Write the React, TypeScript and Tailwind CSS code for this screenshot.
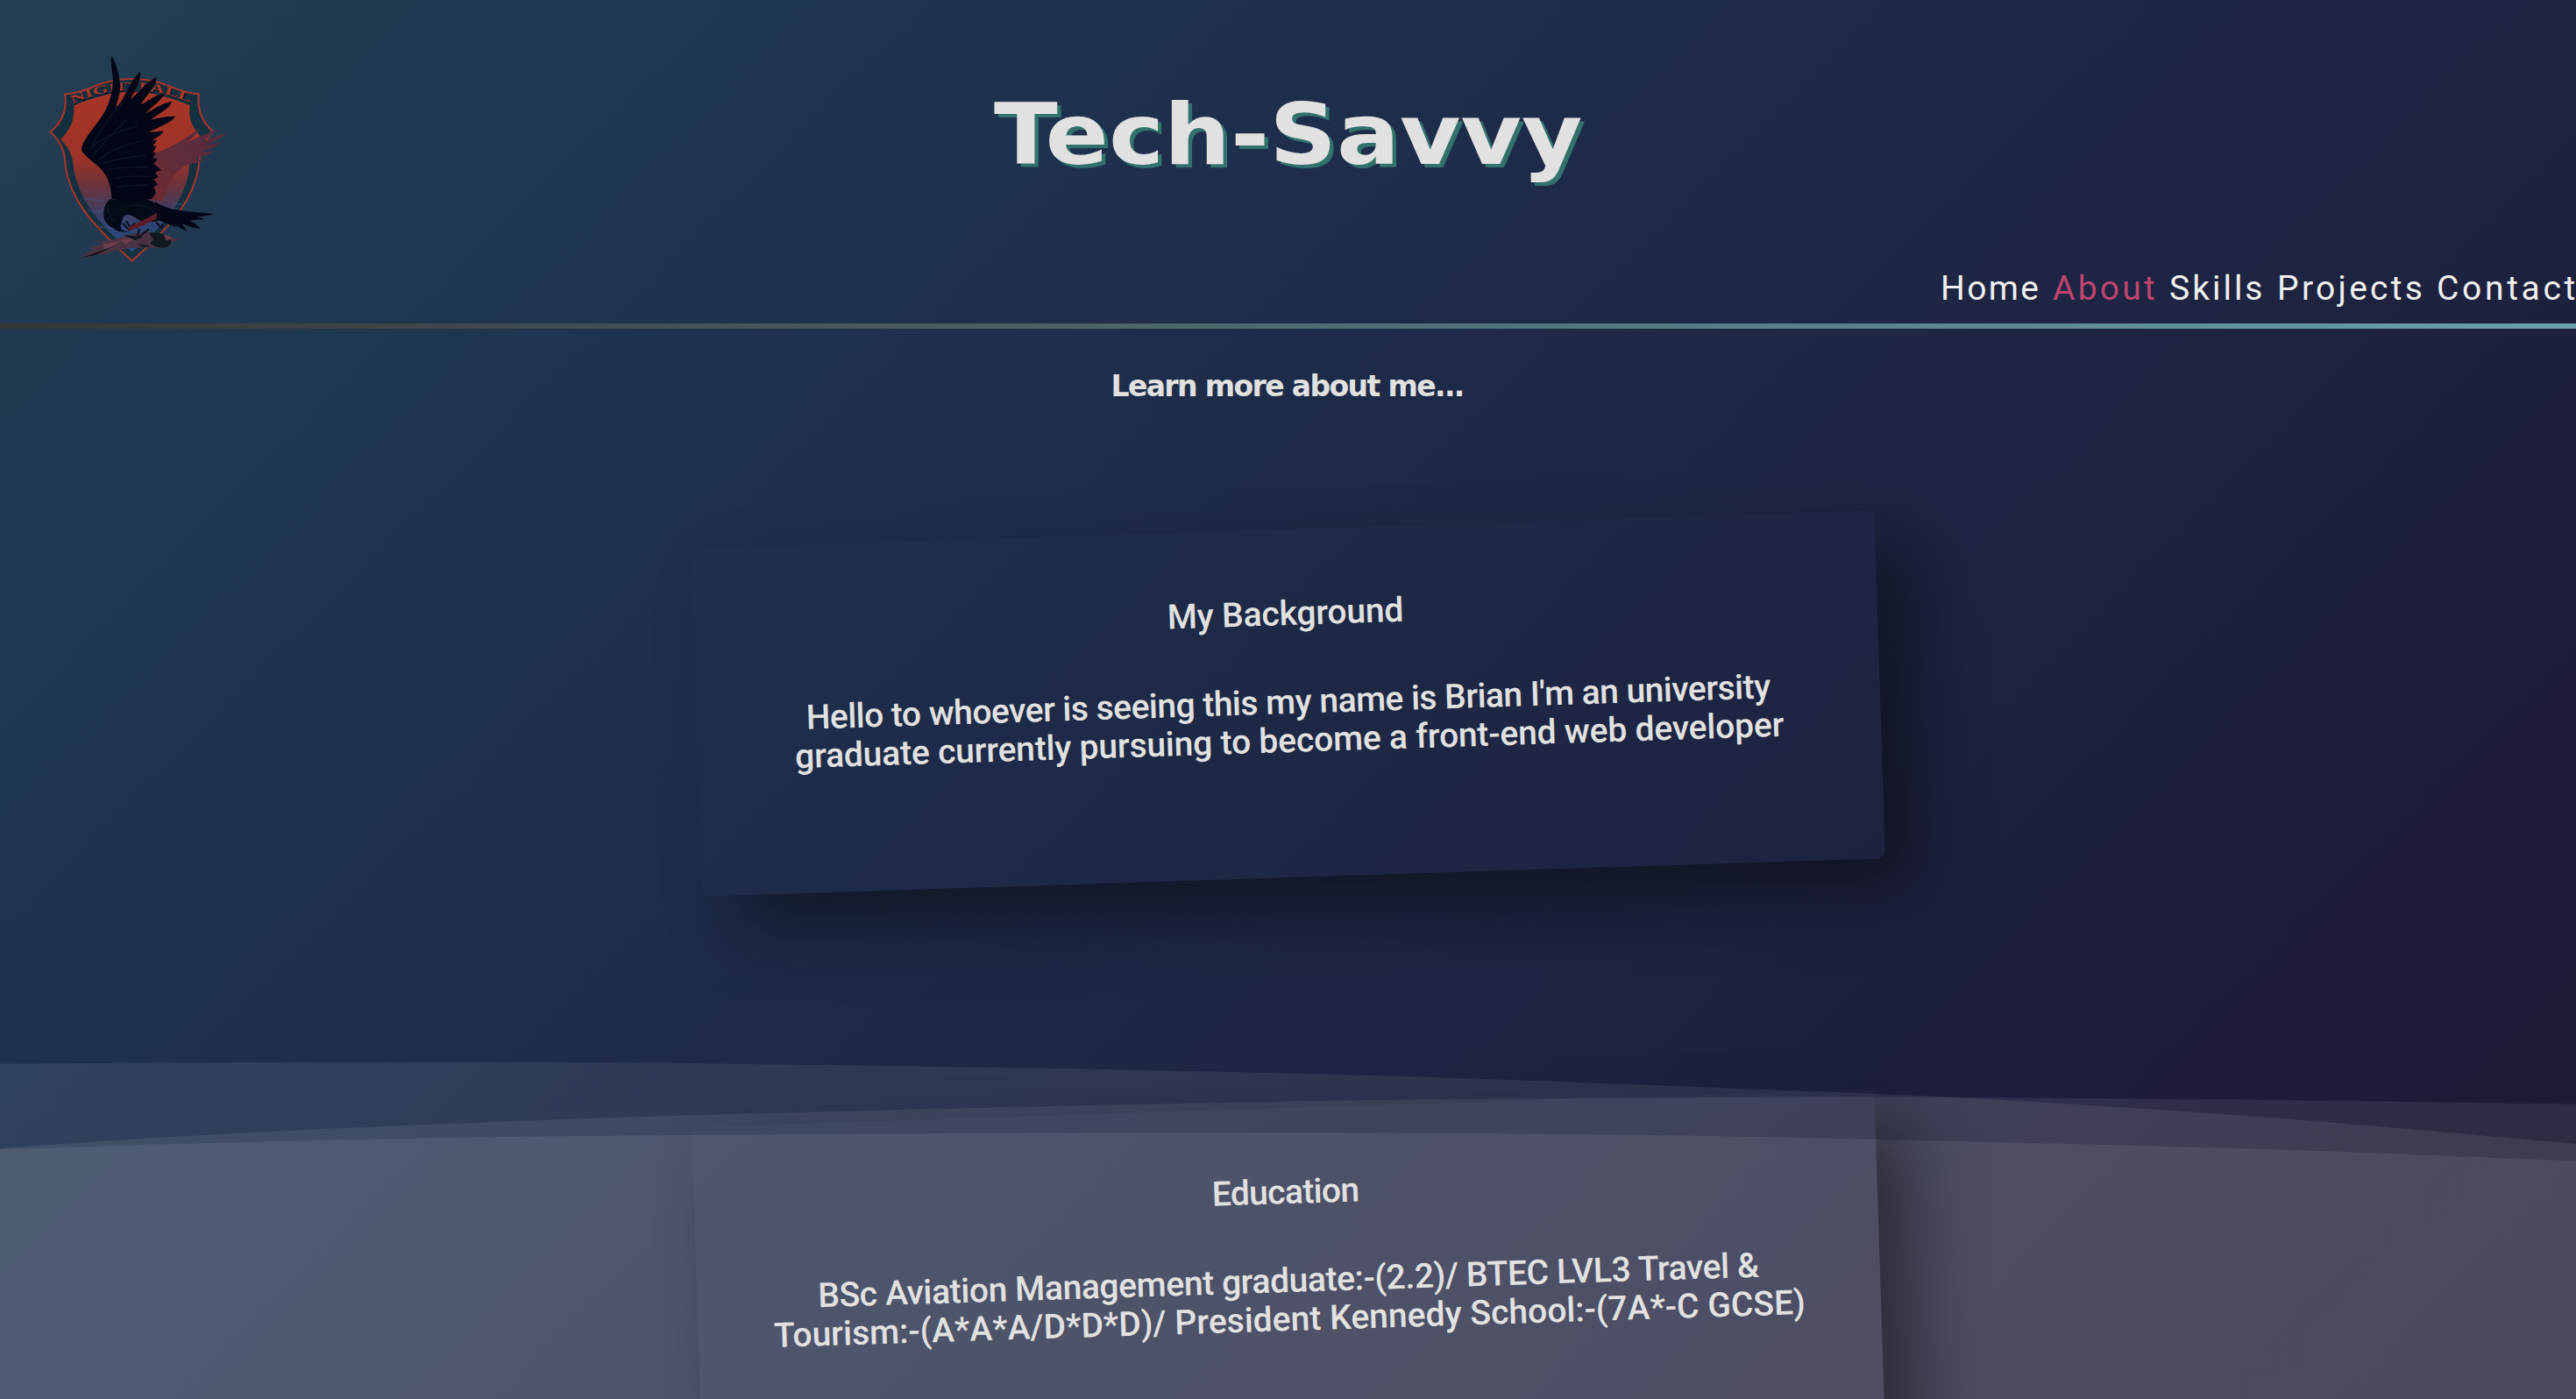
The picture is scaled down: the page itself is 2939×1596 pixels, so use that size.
import { useLayoutEffect, useRef, useState } from 'react';

type FitProps = { text: string; width: number; stretch?: boolean; className?: string };

/** Text run that spans a given width, through its tracking or (stretch) through the width of its letters. */
function Fit({ text, width, stretch = false, className = '' }: FitProps) {
  const ref = useRef<HTMLSpanElement>(null);
  const [natural, setNatural] = useState(width);
  useLayoutEffect(() => {
    if (ref.current) setNatural(ref.current.offsetWidth);
  }, [text, width]);
  const spacing = (width - natural) / (text.length - 1);
  return (
    <span className={`block whitespace-nowrap ${className}`} style={{ width }}>
      <span
        ref={ref}
        className="inline-block origin-left"
        style={stretch ? { transform: `scaleX(${width / natural})` } : { letterSpacing: spacing, marginRight: -spacing }}
      >
        {text}
      </span>
    </span>
  );
}

/** Smooth curve through points, closed down to the bottom of the drawing. */
function wavePath(points: [number, number][]) {
  let d = `M0 400 L${points[0][0]} ${points[0][1]}`;
  for (let i = 0; i < points.length - 1; i++) {
    const p0 = points[Math.max(0, i - 1)];
    const p1 = points[i];
    const p2 = points[i + 1];
    const p3 = points[Math.min(points.length - 1, i + 2)];
    d += ` C${p1[0] + (p2[0] - p0[0]) / 6} ${p1[1] + (p2[1] - p0[1]) / 6} ${p2[0] - (p3[0] - p1[0]) / 6} ${p2[1] - (p3[1] - p1[1]) / 6} ${p2[0]} ${p2[1]}`;
  }
  return `${d} L2939 400 Z`;
}

const waves: [number, number][][] = [
  [[0, 17.5], [400, 15.8], [800, 17.2], [1480, 28.7], [2041, 48], [2280, 58.6], [2600, 79.8], [2939, 109]],
  [[0, 113.7], [306, 95], [800, 76], [1480, 60.3], [1850, 56.5], [2200, 55.7], [2600, 59], [2939, 63.7]],
  [[0, 115.3], [400, 104], [800, 98.7], [1400, 96], [1850, 98.5], [2200, 105.3], [2570, 114.5], [2939, 128.5]],
];

function Waves() {
  return (
    <svg className="pointer-events-none absolute bottom-0 left-0 h-[400px] w-full" viewBox="0 0 2939 400" preserveAspectRatio="none">
      {waves.map((w, i) => (
        <path key={i} d={wavePath(w)} fill="#fff" fillOpacity={0.077} />
      ))}
    </svg>
  );
}

function Logo() {
  return (
    <svg className="h-[280px] w-[260px]" viewBox="0 0 780 840">
      <defs>
        <linearGradient id="field" x1="0" y1="190" x2="0" y2="770" gradientUnits="userSpaceOnUse">
          <stop offset="0" stopColor="#a83526" />
          <stop offset="0.4" stopColor="#9d3328" />
          <stop offset="0.55" stopColor="#6e3238" />
          <stop offset="0.66" stopColor="#4d3a55" />
          <stop offset="0.8" stopColor="#2f4472" />
          <stop offset="1" stopColor="#29508c" />
        </linearGradient>
        <linearGradient id="farWing" x1="680" y1="334" x2="440" y2="540" gradientUnits="userSpaceOnUse">
          <stop offset="0" stopColor="#542a40" />
          <stop offset="0.5" stopColor="#5e2c3a" />
          <stop offset="1" stopColor="#6b2a33" />
        </linearGradient>
        <path id="banner" d="M158 236 Q255 189 362 188 Q470 189 575 238" />
      </defs>
      <path
        d="M133 202 C215 198 250 150 362 150 C474 150 510 198 590 202 C584 262 606 300 640 332 C604 366 594 400 590 450 C572 560 510 640 362 773 C214 640 152 560 134 450 C132 400 122 366 82 332 C120 300 140 262 133 202 Z"
        fill="#12303f"
        stroke="#a8352a"
        strokeWidth="6"
      />
      <path
        d="M163 240 C230 214 290 194 362 194 C434 194 492 214 560 240 C552 290 572 320 600 352 C566 384 558 420 556 470 C540 560 480 650 362 742 C244 650 184 560 164 470 C160 420 152 390 118 358 C152 320 166 290 163 240 Z"
        fill="url(#field)"
      />
      <path d="M196 560 l70 8 M210 600 l60 5 M250 655 l80 12 M500 575 l38 6 M470 590 l50 4" stroke="#435078" strokeWidth="5" opacity="0.6" />
      <g className="font-['Liberation_Serif',serif] text-[40px] font-bold">
        <text fill="#0a1620" transform="translate(4 5)">
          <textPath href="#banner" textLength="415" lengthAdjust="spacingAndGlyphs">NIGHTFALL</textPath>
        </text>
        <text fill="#ab382b">
          <textPath href="#banner" textLength="415" lengthAdjust="spacingAndGlyphs">NIGHTFALL</textPath>
        </text>
      </g>
      {/* far wing */}
      <path
        d="M436 405 C490 390 550 350 592 320 C590 332 570 350 552 366 C590 350 622 334 652 324 C646 338 620 352 600 366 C630 356 656 342 684 334 C672 352 640 366 612 378 C634 374 650 370 666 366 C650 384 622 392 598 400 C614 400 630 398 646 396 C624 412 600 418 576 422 C590 426 600 426 614 424 C590 440 560 442 540 448 C520 470 500 476 494 500 C480 530 474 550 466 566 L430 564 Z"
        fill="url(#farWing)"
      />
      {/* prey */}
      <path
        d="M186 762 C210 742 224 738 240 730 L214 734 C230 722 246 720 262 714 L232 704 C270 706 300 700 330 690 C380 672 430 670 470 680 L502 694 L524 700 L498 708 C498 722 486 728 470 728 L380 728 C330 730 290 740 262 752 L236 752 L212 764 L214 752 Z"
        fill="#4a3242"
      />
      <path d="M420 678 C450 672 474 680 480 694 L496 704 C496 722 482 728 466 728 L440 724 L424 712 L436 700 Z" fill="#111820" />
      <path d="M470 682 L500 692 L480 704 Z M322 700 L380 690 L340 716 Z M262 716 L330 704 L270 736 Z" fill="#6a3f4c" />
      <path d="M330 684 L400 690 L372 702 Z M380 716 L424 720 L400 726 Z M190 762 L262 736 L300 722 L240 752 Z" fill="#10161f" />
      {/* tail */}
      <path
        d="M440 570 C470 588 500 598 540 602 C575 608 610 606 640 612 C626 618 600 620 586 622 C600 626 606 628 610 630 L560 634 C580 646 590 656 596 662 C572 662 552 652 532 646 L552 672 C530 664 516 654 504 642 L516 658 C490 650 470 640 450 632 Z"
        fill="#020616"
      />
      {/* body and head */}
      <path
        d="M290 560 C320 570 350 556 400 560 C440 566 464 590 470 612 C462 640 440 640 412 640 C384 640 372 616 344 614 C326 618 330 640 322 652 L326 666 L348 674 L316 672 C296 660 272 650 266 626 C262 600 268 574 290 560 Z"
        fill="#050a18"
      />
      <path d="M342 636 l14 22 l14 -12 l10 16 M330 644 l22 24 l22 -16 M388 664 l-8 22 M420 664 l-34 26 M444 640 l18 20 l6 -14" stroke="#0a0f1c" strokeWidth="6" fill="none" />
      <path d="M448 608 L446 628 C420 644 390 656 346 672 L352 656 C390 640 410 628 448 608 Z" fill="#5c1c28" />
      {/* near wing */}
      <path
        d="M292 72 C306 92 316 130 322 170 C322 200 312 226 306 248 C340 220 356 150 390 126 C396 150 372 190 356 220 C384 200 404 164 446 144 C448 168 412 206 392 238 C420 224 446 202 472 200 C462 226 424 248 410 268 C440 252 466 232 498 228 C494 250 450 270 426 290 C450 284 476 278 510 278 C498 300 452 314 420 332 C440 332 452 330 468 328 C466 346 440 350 432 362 L448 358 L434 380 L446 380 L434 402 L444 404 L432 420 L450 424 L436 440 L462 462 L440 470 L452 486 L436 494 L450 512 L436 520 L444 540 L430 560 L350 572 L292 560 C290 530 288 500 262 466 C236 436 204 420 190 396 C184 368 230 322 264 270 C292 220 298 180 296 140 C292 110 288 90 292 72 Z"
        fill="#020616"
      />
      <path
        d="M222 390 C240 340 290 270 330 230 M230 410 C270 360 300 340 340 290 M250 424 C300 390 350 370 400 362 M262 440 C320 420 360 420 410 410 M280 462 C330 450 380 450 420 452 M300 490 C340 484 380 480 424 484 M312 520 C350 514 380 512 420 514 M232 376 C270 350 300 330 380 312 M276 590 C284 610 292 620 300 640 M350 586 C390 574 420 590 440 606"
        stroke="#17283a"
        strokeWidth="4"
        fill="none"
        opacity="0.5"
      />
    </svg>
  );
}

const links = [
  { label: 'Home', width: 112 },
  { label: 'About', width: 117 },
  { label: 'Skills', width: 107 },
  { label: 'Projects', width: 166 },
  { label: 'Contact', width: 158 },
];

function Card({ title, titleWidth, lines }: { title: string; titleWidth: number; lines: { text: string; width: number }[] }) {
  return (
    <article className="flex h-[397px] w-[1350px] shrink-0 -rotate-[1.85deg] flex-col items-center rounded-[10px] pt-[74px] text-[39px] leading-[44px] font-medium shadow-[40px_40px_80px_rgba(0,0,0,0.43)]">
      <h3 className="mb-[57px]">
        <Fit text={title} width={titleWidth} />
      </h3>
      {lines.map((l) => (
        <Fit key={l.text} text={l.text} width={l.width} />
      ))}
    </article>
  );
}

export default function App() {
  return (
    <div className="relative h-[1596px] w-full overflow-hidden bg-[linear-gradient(135deg,#233e51_0%,#1e334f_25%,#1e2946_48%,#1e2340_66%,#1d1c38_85%,#1e1832_100%)] font-['Roboto',sans-serif] text-[#e1e1e1]">
      <Waves />
      <div className="relative flex flex-col">
        <header className="h-[369px]">
          <div className="grid h-[301px] grid-cols-[1fr_auto_1fr] items-start">
            <div className="pt-10 pl-[30px]">
              <Logo />
            </div>
            <h1 className="pt-[98px] font-['DejaVu_Sans',sans-serif] text-[96px] leading-[112px] font-bold [text-shadow:4px_4px_0_#33716c]">
              <Fit text="Tech-Savvy" width={672} stretch />
            </h1>
          </div>
          <nav className="flex justify-end gap-4 pr-px text-[39px] leading-[56px] text-[#efefef]">
            {links.map((l) => (
              <a key={l.label} className={l.label === 'About' ? 'text-[#bd4472]' : ''}>
                <Fit text={l.label} width={l.width} />
              </a>
            ))}
          </nav>
        </header>
        <div className="h-1.5 bg-[linear-gradient(90deg,#363636,#69a0ae)]" />
        <h2 className="flex h-[130px] justify-center pt-[46px] font-['DejaVu_Sans',sans-serif] text-[33px] leading-[40px] font-bold">
          <Fit text="Learn more about me..." width={404} />
        </h2>
        <main className="flex flex-col items-center gap-[263px] pt-[99px]">
          <Card
            title="My Background"
            titleWidth={270}
            lines={[
              { text: "Hello to whoever is seeing this my name is Brian I'm an university", width: 1101 },
              { text: 'graduate currently pursuing to become a front-end web developer', width: 1129 },
            ]}
          />
          <Card
            title="Education"
            titleWidth={168}
            lines={[
              { text: 'BSc Aviation Management graduate:-(2.2)/ BTEC LVL3 Travel &', width: 1074 },
              { text: 'Tourism:-(A*A*A/D*D*D)/ President Kennedy School:-(7A*-C GCSE)', width: 1177 },
            ]}
          />
        </main>
      </div>
    </div>
  );
}
